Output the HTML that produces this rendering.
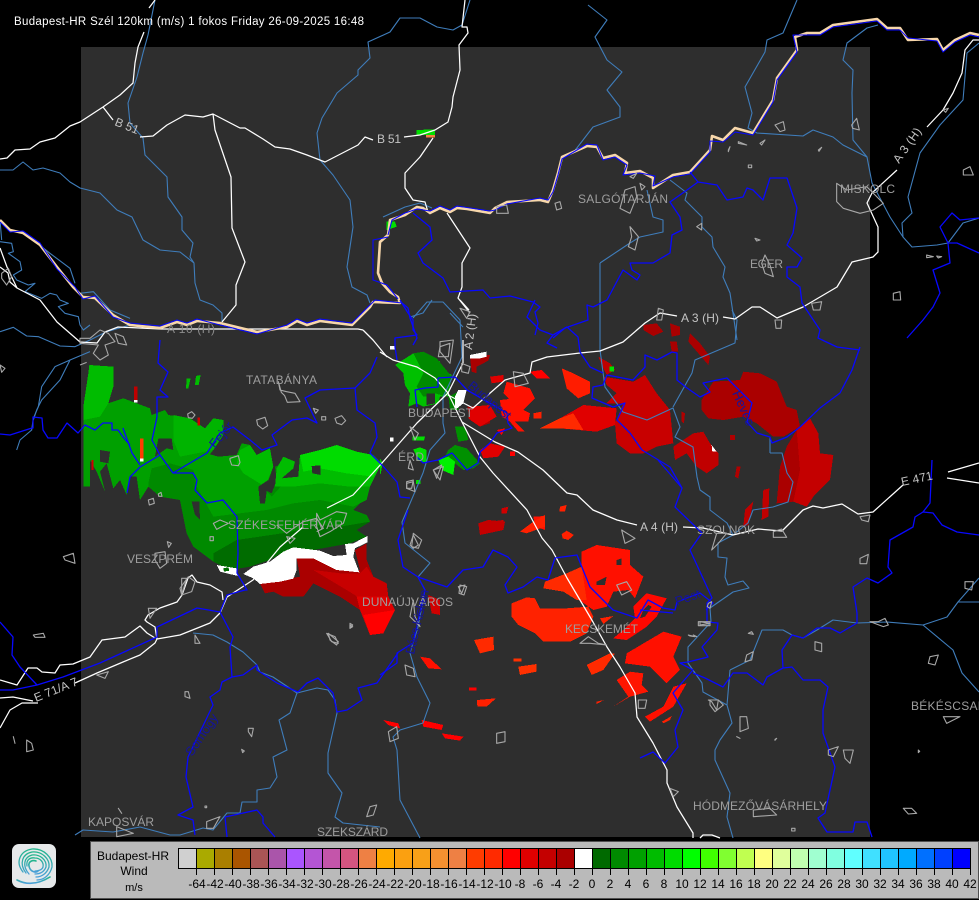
<!DOCTYPE html>
<html><head><meta charset="utf-8"><title>Budapest-HR</title>
<style>
html,body{margin:0;padding:0;background:#000;width:979px;height:900px;overflow:hidden}
svg{display:block;font-family:"Liberation Sans",sans-serif}
.riv{fill:none;stroke:#3f7dbb;stroke-width:1.1;stroke-linejoin:round}
.blu{fill:none;stroke:#0808ff;stroke-width:1.3;stroke-linejoin:round}
.rd{fill:none;stroke:#fff;stroke-width:1.25;stroke-linejoin:round}
.twn{fill:none;stroke:#a8a8a8;stroke-linejoin:round}
.lb{fill:#9e9e9e;font-size:12px}
.rl{fill:#c4c4c4;font-size:12px}
.cn{fill:#14149c;font-size:13px}
.lg{fill:#000;font-size:12px;text-anchor:middle}
</style></head><body>
<svg width="979" height="900" viewBox="0 0 979 900" xmlns="http://www.w3.org/2000/svg">
<defs><linearGradient id="sw" x1="0" y1="0" x2="0" y2="1"><stop offset="0" stop-color="#22b58c"/><stop offset="1" stop-color="#4a9fd8"/></linearGradient></defs>
<rect width="979" height="900" fill="#000"/>
<rect x="81" y="47" width="789" height="790" fill="#2e2e2e"/>

<!-- west radar -->
<g transform="translate(80,340) scale(.33333)" shape-rendering="crispEdges">
<polygon fill="#00a000" points="28,75 100,80 100,140 85,190 130,175 210,205 215,225 255,210 265,225 330,235 375,265 400,235 430,240 430,285 400,330 360,380 345,420 355,485 300,480 240,470 205,440 180,480 170,410 150,410 140,465 120,420 100,445 80,370 60,395 75,455 50,395 30,360 30,440 10,440 10,200 25,100"/>
<polygon fill="#00bc00" points="28,75 100,80 100,140 85,190 60,230 10,240 10,200 25,100"/>
<polygon fill="#00b400" points="280,225 330,235 375,265 400,235 430,240 430,285 400,330 300,350 280,300"/>
<polygon fill="#008a00" points="205,430 215,385 270,370 340,390 380,340 415,350 470,345 485,310 510,315 530,345 570,325 580,380 555,450 575,460 590,420 585,380 610,370 610,350 645,365 640,385 620,400 605,415 655,410 660,345 720,330 770,315 830,335 880,345 905,370 870,440 860,470 820,510 860,525 870,545 830,570 860,590 810,610 700,630 620,630 570,660 510,680 450,690 400,665 340,620 320,580 300,480 240,470 205,440"/>
<polygon fill="#00a000" points="380,340 415,350 470,345 485,310 510,315 530,345 570,325 580,380 555,450 575,470 620,420 655,410 700,420 830,420 870,440 860,480 820,500 720,480 640,490 560,510 480,520 400,530 350,440 340,390"/>
<polygon fill="#00bc00" points="480,330 510,315 530,345 570,325 580,380 555,440 490,400 470,370"/>
<polygon fill="#00bc00" points="610,350 645,365 640,385 605,415 655,410 660,345 720,330 770,315 830,335 880,345 905,370 870,440 810,440 720,430 640,440 585,440 590,385"/>
<polygon fill="#00dc00" points="660,345 720,330 770,315 830,335 880,345 905,370 880,410 800,400 720,385 670,395"/>
<polygon fill="#006c00" points="400,640 470,600 620,578 720,555 780,560 870,545 830,570 860,590 810,610 700,630 620,630 570,660 510,680 450,690 400,665"/>
<polygon fill="#2e2e2e" points="60,330 90,335 85,370 60,365"/>
<polygon fill="#2e2e2e" points="235,295 275,295 280,330 260,325 225,350"/>
<polygon fill="#2e2e2e" points="695,378 722,376 722,405 697,400"/>
<polygon fill="#2e2e2e" points="335,485 358,485 360,540 345,525"/>
<polygon fill="#2e2e2e" points="535,440 565,420 555,490 540,490"/>
<polygon fill="#aa0000" points="540,730 555,760 580,755 610,770 670,770 700,730 780,770 840,810 870,885 910,880 945,810 925,770 920,730 880,710 860,660 860,610 825,630 840,690 770,690 700,655 650,655 660,710 600,720"/>
<polygon fill="#c80000" points="700,690 780,700 840,700 860,680 880,710 920,730 925,770 945,810 880,800 800,750"/>
<polygon fill="#e00000" points="830,770 925,770 945,810 910,880 870,885 840,810"/>
<polygon fill="#ff0000" points="850,825 945,810 910,880 870,885"/>
<polygon fill="#ffffff" points="862,588 820,610 795,612 800,645 760,648 720,632 690,628 640,622 610,635 570,665 520,680 490,702 520,715 540,732 600,725 640,716 650,690 650,655 700,655 770,690 838,697 820,650 825,625 862,607"/>
<polygon fill="#ffffff" points="410,675 470,685 475,708 440,700 420,695"/>
<polygon fill="#006c00" points="430,685 445,682 448,692 432,695"/>
<polygon fill="#c00000" points="162,140 172,140 172,180 162,180"/>
<polygon fill="#fff" points="162,180 172,180 172,188 162,188"/>
<polygon fill="#ff3c00" points="180,295 190,295 190,355 180,355"/>
<polygon fill="#fff" points="180,355 190,355 190,365 180,365"/>
<polygon fill="#d00000" points="352,232 360,232 360,256 352,256"/>
<polygon fill="#d00000" points="35,360 40,360 40,390 35,390"/>
<polygon fill="#00bc00" points="320,115 332,115 325,145 318,145"/>
<polygon fill="#00bc00" points="348,108 362,105 356,135 345,135"/>
<polygon fill="#fff" points="930,292 940,292 940,304 930,304"/>
</g>
<!-- Budapest radar -->
<g transform="translate(380,300) scale(.33333)" shape-rendering="crispEdges">
<polygon fill="#00c000" points="45,195 100,160 130,155 180,185 190,210 215,225 205,290 180,290 175,310 130,320 110,310 85,320 90,280 75,255 70,220"/>
<polygon fill="#008a00" points="100,160 130,155 170,175 215,230 200,290 165,280 140,290 130,290 110,260 130,220"/>
<polygon fill="#2e2e2e" points="140,280 165,280 165,310 140,315"/>
<polygon fill="#008000" points="205,290 235,275 235,330 210,330"/>
<polygon fill="#fff" points="235,270 260,270 250,310 225,330 225,290"/>
<polygon fill="#aa0000" points="262,320 330,325 330,370 300,380 270,360"/>
<polygon fill="#aa0000" points="270,170 330,165 325,182 290,200 290,220 275,215"/>
<polygon fill="#fff" points="270,165 320,155 320,170 300,175 270,175"/>
<polygon fill="#009000" points="225,380 255,380 265,420 235,425"/>
<polygon fill="#009000" points="205,450 225,435 260,445 300,490 280,505 250,510 225,490 220,520 190,510 175,490 195,470"/>
<polygon fill="#00f000" points="175,480 205,470 225,485 220,525 190,512"/>
<polygon fill="#00e000" points="100,448 120,442 140,450 140,490 115,482"/>
<polygon fill="#00e000" points="98,410 135,410 132,422 98,422"/>
<polygon fill="#00d000" points="0,475 8,490 2,522 0,522"/>
<polygon fill="#00e000" points="108,540 122,540 122,552 108,552"/>
<polygon fill="#fff" points="30,138 45,138 45,148 30,148"/>
<polygon fill="#fff" points="30,412 40,412 40,424 30,424"/>
</g>
<!-- east radar -->
<g transform="translate(460,310) scale(.33333)" shape-rendering="crispEdges">
<polygon fill="#c80000" points="430,200 520,215 555,195 590,250 630,300 640,400 590,410 550,430 510,430 470,400 465,340 490,280 440,280 470,250 440,225"/>
<polygon fill="#e00000" points="240,355 300,325 370,285 470,295 465,345 410,365 300,355 260,355"/>
<polygon fill="#ff2a00" points="240,355 300,325 340,310 370,360 300,355"/>
<polygon fill="#ff1c00" points="305,175 340,190 390,215 390,250 355,265 320,235"/>
<polygon fill="#c00000" points="640,410 700,370 730,365 750,400 775,430 775,465 740,490 710,470 680,430 645,450"/>
<polygon fill="#aa0000" points="725,270 760,215 840,210 850,185 900,190 950,215 980,290 1010,300 1020,350 970,380 940,380 890,340 850,320 790,330 745,325 725,300"/>
<polygon fill="#c40000" points="950,580 960,470 980,410 1010,360 1050,325 1075,370 1080,430 1120,435 1110,510 1060,560 1040,590 1000,575"/>
<polygon fill="#aa0000" points="950,580 960,470 980,410 1010,360 1020,480 1000,575"/>
<polygon fill="#aa0000" points="550,45 590,40 610,65 580,78 550,60"/>
<polygon fill="#aa0000" points="630,40 660,50 660,75 635,80"/>
<polygon fill="#aa0000" points="690,70 720,100 750,140 745,165 715,130 685,95"/>
<polygon fill="#aa0000" points="630,95 650,95 655,125 635,125"/>
<polygon fill="#b00000" points="665,305 675,310 672,340 665,335"/>
<polygon fill="#b00000" points="810,375 825,375 825,390 810,390"/>
<polygon fill="#b00000" points="830,470 842,470 835,505 825,500"/>
<polygon fill="#c00000" points="910,540 928,535 925,620 905,630 908,570"/>
<polygon fill="#c00000" points="855,600 880,575 865,645 850,650"/>
<polygon fill="#ff1000" points="140,215 210,235 225,265 190,280 185,300 165,290 150,270 130,250"/>
<polygon fill="#ff0000" points="210,185 245,180 270,205 230,205"/>
<polygon fill="#e00000" points="90,200 130,195 130,215 95,220"/>
<polygon fill="#e00000" points="35,290 90,285 110,320 60,350 25,325"/>
<polygon fill="#ff1000" points="120,270 215,260 225,265 190,300 210,310 205,335 165,335 195,365 175,365 150,335 125,320"/>
<polygon fill="#ff2000" points="220,310 245,305 245,325 220,325"/>
<polygon fill="#ff0000" points="110,360 135,355 125,375"/>
<polygon fill="#e00000" points="60,420 90,400 135,410 115,440 70,445"/>
<polygon fill="#ff0000" points="150,425 165,425 165,438 150,438"/>
<polygon fill="#ff2000" points="300,590 320,585 315,605 298,605"/>
<polygon fill="#d00000" points="125,595 145,590 140,610 125,610"/>
<polygon fill="#ff1000" points="220,620 255,618 255,660 225,650"/>
<polygon fill="#d00000" points="55,640 130,630 130,655 60,655"/>
<polygon fill="#c00000" points="415,140 450,160 465,180 440,195 425,165"/>
<polygon fill="#00e000" points="448,170 462,170 462,185 448,185"/>
<polygon fill="#fff" points="755,405 770,425 757,425"/>
</g>
<!-- south radar -->
<g transform="translate(380,510) scale(.33333)" shape-rendering="crispEdges">
<polygon fill="#c40000" points="295,40 325,30 375,35 370,60 300,75"/>
<polygon fill="#ff2000" points="420,65 460,35 495,15 495,50 440,70"/>
<polygon fill="#ff2000" points="545,72 560,62 582,75 565,90 548,85"/>
<polygon fill="#ff1000" points="605,125 650,105 750,120 750,165 790,200 765,265 745,240 700,245 680,290 640,300 600,272 550,245 490,235 495,215 560,190 605,170"/>
<polygon fill="#ff2a00" points="490,235 495,215 560,190 605,170 620,270 590,270 550,245"/>
<polygon fill="#2e2e2e" points="650,215 680,200 675,225 650,225"/>
<polygon fill="#2e2e2e" points="710,150 725,145 725,165 710,165"/>
<polygon fill="#ff2200" points="395,280 440,262 465,265 480,295 560,295 625,290 640,320 620,370 570,395 490,395 465,370 415,345 395,320"/>
<polygon fill="#ff0800" points="760,290 800,250 860,265 830,320 800,350 740,390 700,385 735,355 765,325"/>
<polygon fill="#2e2e2e" points="790,300 805,285 815,290 795,320 780,325"/>
<polygon fill="#ff1000" points="740,430 850,365 905,380 880,440 900,480 860,520 810,470 735,460"/>
<polygon fill="#ff2a00" points="620,465 690,430 705,430 670,480 635,495"/>
<polygon fill="#ff1500" points="710,510 750,485 790,490 785,525 805,545 750,560 700,590 745,560"/>
<polygon fill="#ff1000" points="795,620 850,590 880,530 920,520 880,590 810,635"/>
<polygon fill="#ff2a00" points="282,390 340,380 342,420 300,430"/>
<polygon fill="#ff1000" points="120,440 150,445 185,478 145,475"/>
<polygon fill="#ff3000" points="415,470 470,462 470,485 420,495"/>
<polygon fill="#ff3000" points="400,445 425,445 425,455 400,455"/>
<polygon fill="#ff0000" points="267,532 290,532 290,542 267,542"/>
<polygon fill="#ff2000" points="291,570 348,565 320,590 292,590"/>
<polygon fill="#ff0000" points="125,630 190,645 185,660 130,650"/>
<polygon fill="#ff0000" points="185,670 250,680 240,692 195,685"/>
<polygon fill="#ff0000" points="10,630 55,640 60,655 25,645"/>
<polygon fill="#d00000" points="145,255 180,270 180,315 155,310"/>
<polygon fill="#ff2000" points="650,575 672,570 650,582"/>
<polygon fill="#ff2000" points="846,635 875,618 870,630 850,640"/>
<polygon fill="#ff2000" points="660,325 700,318 670,342"/>
</g>
<!-- north small -->
<g transform="scale(.33333)" shape-rendering="crispEdges">
<polygon fill="#00dd00" points="1250,390 1305,388 1305,405 1250,405"/>
<polygon fill="#f08040" points="1278,405 1305,405 1305,413 1278,413"/>
<polygon fill="#00dd00" points="1160,665 1185,665 1190,680 1160,690"/>
</g>

<!-- rivers -->
<g class="riv">
<path d="M155 0L148 35 143 53 137 77 128 103 130 123 143 138 145 155 167 177 168 197 182 217 182 230 193 243 190 257 194 263 195 283 200 300 213 305 222 313 222 322"/>
<path d="M0 170L13 170 23 162 33 170 43 168 60 173 70 182 80 188 100 193 117 210 132 217 143 240 160 250 180 252 194 263"/>
<path d="M470 0L462 25 453 30 437 27 420 18 400 18 390 32 368 42 370 58 358 70 358 75 337 93 322 118 317 133 320 160 333 175 350 200 353 227 347 267 352 287 367 295 370 303"/>
<path d="M383 217L405 207 420 203 432 208"/>
<path d="M413 318L427 302 443 302 460 320 462 357 443 397 443 423 445 433 430 450 423 473 402 522 405 543 430 563 418 577 425 590 418 627 410 653 417 677 430 703 423 723 400 730 393 737 397 750 400 800 420 838"/>
<path d="M432 300L423 313 410 317"/>
<path d="M450 313L463 327"/>
<path d="M600 263L600 350 605 387 623 412 647 420 673 408 680 427 675 437 693 447 697 477 700 490 710 497 710 510 727 523 733 535 718 543 718 557 727 558 725 577 728 585 743 581 749 588 733 592 710 608 711 622 688 647 688 663 702 683 703 692 727 705 732 723 720 740 715 750 715 760 730 793 727 817 733 838"/>
<path d="M732 310L737 320 735 343 695 360 692 373 673 407"/>
<path d="M770 453L770 437M770 453L782 453 787 473 793 482 788 502 773 507 753 510 748 523 733 535"/>
<path d="M588 5L607 20 595 37 607 60 622 72 607 90 620 107 620 117 593 127 573 153 562 157"/>
<path d="M797 0L783 33 767 40 765 52 745 87 752 113 748 128 757 133 803 136 813 130 833 137 843 145 867 157 872 183 890 217 903 237 912 247 937 245 948 243 963 223 979 218"/>
<path d="M878 25L867 28 847 43 843 60 853 70 852 93 853 140 867 157"/>
<path d="M979 43L967 53 963 100 940 125 920 153 908 197 912 213 902 223 903 237"/>
<path d="M670 180L687 193 685 200 702 217 702 227 712 237 713 247 725 267 723 277 730 293 737 340"/>
<path d="M647 190L653 217 663 220 663 232 640 237 630 243 600 263"/>
<path d="M730 670L750 660 762 630 783 630 792 635 803 638 817 630 833 620 857 623 887 622 923 625 947 617 958 602 979 602M958 602L979 578M923 625L953 650 962 673 979 692M730 670L727 705"/>
<path d="M75 835L83 830 113 832 140 827 170 835 180 835 203 828 213 830 227 813 240 813 242 802 257 802 257 790 270 788 277 777 273 757 287 750 279 720 290 713 297 693 317 688 328 690 335 700 337 713 328 753 328 773 342 793 335 817 343 823 380 827"/>
<path d="M193 633L213 635 227 642 243 652 257 665 260 672 273 677 297 693"/>
</g>
<g class="riv" transform="translate(0,210) scale(.33333)" stroke-width="3.3">
<path stroke-width="3.3" d="M0 30L5 90M0 95L35 100 40 125 25 130 60 155 65 180 40 195 50 210 85 225 105 220 75 245 125 265 150 250 170 255 180 270 205 280 175 290 195 310 235 320 240 345 250 360 270 345"/>
<path stroke-width="3.3" d="M0 365L40 352 80 378 115 380 180 408 225 410 270 390 320 365 390 345"/>
<path stroke-width="3.3" d="M270 425L210 450 165 470 125 530 115 590 100 625 95 660 60 690 50 720"/>
<path stroke-width="3.3" d="M210 450L180 510 125 570 110 600 100 630"/>
<path stroke-width="3.3" d="M100 90L150 130 210 175 225 220M240 250L280 245 330 300 390 325"/>
</g>
<path class="blu" d="M0 434L10 435 32 428 33 428 33 417 42 418 43 430 48 438 57 438 67 423 78 433 85 425 95 430 103 423 112 423 112 430 118 430 123 437 130 445"/>

<!-- roads -->
<g class="rd">
<path d="M155 0L149 8"/>
<path d="M144 32L138 47 135 63 133 83 120 95 103 107 80 122 70 126 55 138 40 142 30 149 15 150 7 158 0 159"/>
<path d="M103 107L113 120"/>
<path d="M140 137L153 136 167 125 185 115 203 117 213 114 240 128 245 128 263 139 275 147 290 149 307 155 325 162 358 145 365 137 373 140"/>
<path d="M404 137L420 135 435 130 448 122 452 107 453 97 460 70 459 45 468 33 467 27 462 27 465 0"/>
<path d="M433 138L420 157 405 173 405 188 413 200 425 202 428 212"/>
<path d="M213 114L215 130 231 177 232 228 245 262 236 285 236 305 222 322"/>
<path d="M447 213L470 248 462 263 462 287 458 298 470 313"/>
<path d="M463 363L448 393 417 423 382 463 353 495 327 508"/>
<path d="M303 527L280 547 253 580 227 597 220 613 210 623 180 635 157 639 155 643 140 655 123 662 97 673 75 683"/>
<path d="M0 698L13 697 33 701"/>
<path d="M0 728L10 710 22 703 38 703"/>
<path d="M157 639L155 627 147 622 145 620 148 615 160 608 177 602 182 595 188 578 192 575 197 582 210 585 222 592 223 600"/>
<path d="M0 680L17 685 28 668 37 668 42 672 55 673 60 665 73 664 90 657 102 640 125 637 140 626 147 633 155 638"/>
<path d="M448 395L473 408 505 380 530 373 532 362 547 357 580 353 600 351 623 342 645 323 660 313 677 316"/>
<path d="M723 317L735 319 752 307 760 307 777 318 803 307 837 287 852 262 873 257 878 252 878 227 867 203 872 193 897 170"/>
<path d="M927 127L943 110 953 93 962 73 965 50 973 40 979 40"/>
<path d="M462 422L495 442 518 452 543 470 567 493 577 495 593 510 617 520 637 525"/>
<path d="M683 527L703 528 733 535 758 529 782 531 803 510 813 506 823 508 842 504 858 514 873 512 903 485"/>
<path d="M948 472L979 463M947 478L979 483"/>
<path d="M462 422L480 457 493 473 527 510 542 538 552 550 567 578 580 600 593 622 607 647 620 667 635 693 637 717 653 743 667 770 667 783 677 807 693 833 693 838"/>
<path d="M700 838L703 835 712 835 720 838"/>
<path d="M380 352L393 360 417 367 435 378 448 393 462 422"/>
<path d="M363 330L373 340 387 357"/>
<path d="M460 300L469 310"/>
<path d="M0 248L7 267 17 288 40 300 57 322 80 342 97 343 105 332 118 327 160 329 358 329 363 330"/>
<path d="M0 267L8 273 10 282 17 288"/>
<path d="M463 340L463 363"/>
</g>
<!-- border (beige) -->
<path fill="none" stroke="#f7d7ab" stroke-width="2.6" stroke-linejoin="round" d="M0 220L10 230 23 233 40 245 57 267 73 287 83 297 95 298 113 315 130 325 160 328 177 322 187 325 197 321 220 323 257 332 287 327 297 321 307 325 320 321 352 325 370 307 373 302 400 303 398 297 390 292 382 283 378 273 380 242 388 235 390 220 405 215 417 207 423 208 430 213 440 208 450 212 457 208 467 209 490 213 495 208 507 202 540 200 548 202 553 190 558 173 562 157 587 146 597 147 603 158 615 155 627 163 625 173 640 171 653 178 653 188 673 175 690 172 710 150 712 136 723 140 735 128 753 133 773 100 777 78 797 50 795 37 807 33 820 33 833 25 877 19 887 28 900 28 908 40 937 39 943 50 955 40 970 33 979 35"/>
<path fill="none" stroke="#0808ff" stroke-width="1.1" stroke-linejoin="round" d="M0 222L10 232 23 231 40 243 57 269 75 287 83 299 95 296 113 317 130 323 160 326 177 320 187 323 197 319 220 325 257 334 287 325 297 319 307 323 320 319 352 323 370 305 375 300 402 303M388 237L373 240 373 280 387 285 398 299M388 235L392 220 405 213 417 209 430 211 440 206 450 210 457 206 490 211 495 210 507 204 540 198 548 200 553 192 558 175 562 159 587 144 597 145 603 160 615 157 627 165 623 175 640 173 655 176 653 186 673 177 690 174 710 152 710 141 723 142 735 132 753 135 773 102 777 80 797 52 793 35 807 35 820 35 833 27 877 21 887 30 900 30 908 38 937 41 943 52 955 42 970 35 979 37"/>

<!-- blue county lines -->
<g class="blu">
<path d="M413 213L430 227 432 240 418 253 423 263 443 278 450 292 483 290 490 298 510 296 533 302 540 307 535 312 538 323 535 335"/>
<path d="M690 172L698 182 687 190 670 202 680 217 682 230 672 235 670 253 653 263 630 263 632 270 640 275 637 280 623 270 607 300 593 307 587 305 588 320 565 328 553 338"/>
<path d="M698 182L717 185 727 200 743 197 747 188 753 190 763 200 770 178 787 178 797 208 793 233 787 245 802 258 797 267 787 267 787 277 800 287 802 303 820 330 818 338 837 347 860 350"/>
<path d="M907 338L923 320 933 307 940 293 933 270 950 263 948 243 957 243 979 253"/>
<path d="M948 243L940 227 952 213 960 220 979 218"/>
<path d="M860 347L852 370 840 393 820 408 800 427 787 437 772 443 770 437 757 433 747 422 752 403 727 378 703 383 710 392 700 397 687 388 677 380 677 353 672 352 657 360 645 355 645 367 633 380 607 375 603 385 593 387 592 398 613 407 625 403 617 420 630 433 642 450 670 467 682 488 675 507 702 533 690 550 707 587 712 598 707 603 707 622 718 623 717 630 702 647 708 657 688 662 680 663 693 670 673 693 683 710 675 730 678 747 665 763 653 752 640 758"/>
<path d="M535 300L527 317 540 330 553 335 567 327 578 337 580 352 590 367 603 373M553 335L547 343 557 348"/>
<path d="M555 558L577 555 590 587 613 610 637 618 648 600 663 608 675 610 677 602 700 593 713 603 706 610"/>
<path d="M555 558L548 580 537 577 523 587 508 593 505 585 517 567 508 557 493 550 483 567 463 570 447 587 418 577"/>
<path d="M408 510L398 540 403 567 418 577 425 590 413 643 397 653 397 663 380 675"/>
<path d="M398 653L377 683 358 688 362 700 347 710 337 712 333 693 318 678 307 683 298 692 277 683 257 670 257 665 243 675 232 677 222 682 220 690 210 697 213 705 188 757 186 777 193 807 178 815 193 820 195 835"/>
<path d="M232 677L230 647 233 637 220 612 197 608 157 627 157 637 100 663 63 677 37 685 13 690 0 690M37 685L20 667 12 655 13 637 0 622"/>
<path d="M220 612L227 595 245 590 247 590 237 573 238 553 237 517 223 500 207 503 195 490 197 480 193 473 173 473 160 455 140 467 130 477 127 493M140 465L132 453 123 428"/>
<path d="M160 455L152 440 157 417 157 397 168 397 160 390 168 372 158 363 160 340"/>
<path d="M173 473L207 453 220 433 233 427 250 440 262 450 277 445 272 435 292 420 307 418 317 423 305 398 320 390 355 388 357 410 375 423 377 437 370 453 382 465 397 482 400 497 410 498"/>
<path d="M355 388L370 373 377 357"/>
<path d="M400 300L408 313 413 320 413 330 417 335 395 338 395 347 397 360"/>
<path d="M438 378L455 377 467 390 507 413 508 423 512 428 497 433 490 443 480 452 478 463 467 470 452 453 438 460 423 463 417 457"/>
<path d="M438 378L438 387 425 388 415 390 417 407"/>
<path d="M402 303L408 308 410 318 417 338 413 345"/>
<path d="M225 817L257 810 263 817 263 823 275 837M225 817L227 837"/>
<path d="M640 610L673 613"/>
<path d="M658 460L682 488"/>
<path d="M932 460L930 503 923 512 915 517 913 527 890 540 888 567 892 573 878 583 867 578 853 587 857 613 857 623 840 633 830 628 817 628 803 638 792 635 782 650 783 668 767 677 763 685 747 673 733 673 723 687 705 678 693 673"/>
<path d="M923 512L933 513 942 525 957 532 979 535"/>
<path d="M783 668L792 667 803 680 820 680 828 687 823 710 823 733 835 767 830 790 825 813 818 818 827 832 853 832 855 822 867 822 872 837"/>
</g>

<!-- towns -->
<g class="twn" transform="translate(80,340) scale(.33333)" stroke-width="3.3">
<path d="M323 222l12-7 10 10-8 10-12-2zM530 240l25-8 8 25-15 10-15-12zM765 235l20-8 12 15-12 12-15-5zM450 355l25-8 5 20-5 10-20-2-5-15zM595 125l5 25 20 5 25 5 15 25-38 2-8-20-10-10zM205 480l15-5 3 15-15 5zM235 462l8-5 3 12-10 0zM700 205l15 5-8 10zM725 230h12v10h-12zM400 550l20-10 25 10-20 10-15 8zM590 555l30 25 20-15 30-20 40-10 20 30-20 10M710 520l10 20 50-25 30 5-10 30-40 25-30 15-10-30zM620 590l25 5-15 15zM225 640l30-5 5 35-20 15-15-25zM1000 580l25 20-10 25-20-5zM1140 735l20 5-8 25-15-5zM1080 20l30-10-5 40-30 0zM980 425l20-5-5 25-15 0zM990 360l10 30-15-5zM1060 390l30-10-10 40zM390 590h10v12h-10zM262 605l12 5-8 12zM810 850l8 5-8 10zM740 880l25 10 10 20-20-5zM1000 780l5 50 15 30-30-30zM300 745l25-35 20 15-10 30-30 10z"/>
</g>
<g class="twn" transform="translate(490,0) scale(.33333)" stroke-width="3.3">
<path d="M195 610l15-5 5 20-15 5zM20 620l30-5 5 25-35 0zM405 570l30-10 5 30-20 50-30-15zM420 680l25 30-10 40-20-10 10-30zM620 680l15-10v20zM855 375l25-10 5 25-15 5zM745 425l25 10-25-5zM810 430l15-10-10 15zM715 450l5-10-5 15zM775 495h10v8h-10zM985 450l10-8-8 12zM795 715l15 5-10 3zM1085 375l15-20 8 35-20-5zM1040 550l30 20 60-10 30 30 20 20-30 20-40 10-50-15-20-20zM825 765l15 30 10 35-25-10-10-30zM965 910l30-5-5 25-20 0zM855 960l20 0-2 25-15 0zM420 530l20-10-10 15zM450 550l15 10-10 10zM1210 880l20-5 2 25-22 0zM1420 510l20-10 10 25-30 0zM1360 330l15-5-8 12zM1310 765l20 5-20 3zM1340 768l15 2-10 4zM505 925l15 5-5 30-15 0z"/>
</g>
<g class="twn" transform="translate(640,460) scale(.33333)" stroke-width="3.3">
<path d="M660 295l25-12-5 28-20 0zM400 215l25-8 15 25-40 0zM230 220l30 0-25 30-20 20zM660 170l30-5-5 20-20-5zM205 430l10-5-5 20-8-5zM175 485h35v12h-35zM145 525l20 5-15-2zM325 520l10-5 5 8zM320 585l20-10-5 25-20 5zM525 545l20 5 0 25-20-5zM210 720l25 0 15 15-25 20-15-20zM300 770l20 0 5 35-25 10zM290 830l10 5-10-5zM405 838l5-3-5 6zM565 870l30-10-15 30-15-5zM610 870l30 0-10 40-15-15zM340 1050l50-5 20 20-70 5zM90 985l25 10-15 15zM455 1105h10v8h-10zM870 590l25-5-10 30-20-5zM975 365l25 0-5 25-20-5zM790 1045l25 0 15 15-25 2zM910 770l50 0-40 20zM835 870l4 4-4 4zM690 485h25l20-10 10 20-15 5z"/>
</g>
<g class="twn" transform="translate(0,540) scale(.33333)" stroke-width="3.3">
<path d="M190 50l30-10 5 30-30-10zM100 285l30-5 5 12-30 0zM445 205l25 0-20 30zM545 115l15 0-15 50zM555 455l10 0 5 20-15-5zM745 565l15 0-5 25-10-15zM725 628l8 5-5 5zM1110 800l20-5-10 30-20 5zM985 280l30 25-5 10-20-15zM80 600l15 10 5 20-20 5zM40 590l5 20zM620 845l40-15-20 35-20 0zM615 798h5v5h-5zM355 805l10 15zM350 860l50 20-50 10zM585 285l15 25-15 0zM290 405l35-10-10 20zM1050 255l8 5-8 5z"/>
</g>
<g class="twn" transform="translate(380,510) scale(.33333)" stroke-width="3.3">
<path d="M100 75l15 30-15 10-10-10zM235 230l20-5-10 25zM710 225l30-10 15 25-30 15zM75 465l25 10 5 25-25-5zM25 665l25-15 5 35-25 10zM350 670l25-5 0 30-25 5zM940 375l10 5-10-5zM960 335l30 5-30 5zM985 570h30l-5 30-15-25zM775 570l25 0-5 25-20 0zM600 400l25-20 30 20 25 5-50-5zM725 60l40 25-30 15z"/>
</g>
<g class="twn" transform="translate(380,300) scale(.33333)" stroke-width="3.3">
<path d="M180 125l40-5-10 70-30-35zM240 25l30 10-10 20zM245 190l25 10-5 20-20-5zM400 215l30 5 15 30-40 10zM90 380l25 20-10 20zM80 550l20-5 5 30-25-10zM160 510l25-15-15 40z"/>
</g>
<g class="twn" transform="translate(0,210) scale(.33333)" stroke-width="3.3">
<path d="M5 190L25 175 35 200 20 225 5 205zM240 385l30 0 30-25 25 10 20 25-30 10 10 30-25 15-20-20 15-25-55-5zM345 370l25 10 10 25-25-5zM240 465l20-8M0 465l15 10-10 12z"/>
</g>

<!-- labels -->
<g class="lb">
<text x="246" y="384" textLength="71">TATABÁNYA</text>
<text x="408" y="417" textLength="65">BUDAPEST</text>
<text x="398" y="461" textLength="26">ÉRD</text>
<text x="228" y="529" textLength="115">SZÉKESFEHÉRVÁR</text>
<text x="127" y="563" textLength="66">VESZPRÉM</text>
<text x="362" y="606" textLength="91">DUNAÚJVÁROS</text>
<text x="565" y="633" textLength="73">KECSKEMÉT</text>
<text x="578" y="203" textLength="90">SALGÓTARJÁN</text>
<text x="750" y="268" textLength="33">EGER</text>
<text x="840" y="193" textLength="55">MISKOLC</text>
<text x="697" y="534" textLength="58">SZOLNOK</text>
<text x="693" y="810" textLength="134">HÓDMEZŐVÁSÁRHELY</text>
<text x="911" y="710" textLength="83">BÉKÉSCSABA</text>
<text x="88" y="826" textLength="66">KAPOSVÁR</text>
<text x="317" y="836" textLength="71">SZEKSZÁRD</text>
</g>
<g class="rl">
<text transform="translate(114,125) rotate(22)">B 51</text>
<text x="377" y="143" textLength="24">B 51</text>
<text x="167" y="333" textLength="48" fill="#8c8c8c">A 10 (H)</text>
<text transform="translate(472,350) rotate(-83)" textLength="36">A 2 (H)</text>
<text x="681" y="322" textLength="38">A 3 (H)</text>
<text transform="translate(899,164) rotate(-55)" textLength="40">A 3 (H)</text>
<text x="640" y="531" textLength="38">A 4 (H)</text>
<text transform="translate(902,486) rotate(-12)" textLength="32">E 471</text>
<text transform="translate(36,702) rotate(-22)" textLength="46">E 71/A 7</text>
</g>
<g class="cn">
<text transform="translate(467,387) rotate(40)" textLength="52">Budapest</text>
<text transform="translate(732,393) rotate(66)">Heves</text>
<text transform="translate(677,606) rotate(-20)">Pest</text>
<text transform="translate(192,757) rotate(-56)">Somogy</text>
<text transform="translate(414,655) rotate(-77)" textLength="66">Bács-Kiskun</text>
<text transform="translate(215,449) rotate(-50)">Fejér</text>
</g>
<text x="14" y="25" fill="#fff" font-size="11.5" textLength="350">Budapest-HR Szél 120km (m/s) 1 fokos Friday 26-09-2025 16:48</text>

<!-- legend -->
<rect x="90.5" y="841.5" width="888" height="57" fill="#c8c8c8" fill-opacity=".93" stroke="#505050"/>
<text class="lg" x="133" y="860">Budapest-HR</text>
<text class="lg" x="134" y="875">Wind</text>
<text class="lg" x="134" y="891" style="font-size:11px">m/s</text>
<g stroke="#000" stroke-width="1" shape-rendering="crispEdges">
<rect x="178.5" y="848.5" width="18" height="20" fill="#d0d0d0"/>
<rect x="196.5" y="848.5" width="18" height="20" fill="#aaaa00"/>
<rect x="214.5" y="848.5" width="18" height="20" fill="#aa7f00"/>
<rect x="232.5" y="848.5" width="18" height="20" fill="#aa5500"/>
<rect x="250.5" y="848.5" width="18" height="20" fill="#aa5555"/>
<rect x="268.5" y="848.5" width="18" height="20" fill="#aa55aa"/>
<rect x="286.5" y="848.5" width="18" height="20" fill="#aa55ff"/>
<rect x="304.5" y="848.5" width="18" height="20" fill="#b455d4"/>
<rect x="322.5" y="848.5" width="18" height="20" fill="#c455aa"/>
<rect x="340.5" y="848.5" width="18" height="20" fill="#d45580"/>
<rect x="358.5" y="848.5" width="18" height="20" fill="#ee8044"/>
<rect x="376.5" y="848.5" width="18" height="20" fill="#ffaa00"/>
<rect x="394.5" y="848.5" width="18" height="20" fill="#fba010"/>
<rect x="412.5" y="848.5" width="18" height="20" fill="#f8a018"/>
<rect x="430.5" y="848.5" width="18" height="20" fill="#f59030"/>
<rect x="448.5" y="848.5" width="18" height="20" fill="#ee8044"/>
<rect x="466.5" y="848.5" width="18" height="20" fill="#ff3c00"/>
<rect x="484.5" y="848.5" width="18" height="20" fill="#ff2a00"/>
<rect x="502.5" y="848.5" width="18" height="20" fill="#ff0000"/>
<rect x="520.5" y="848.5" width="18" height="20" fill="#e00000"/>
<rect x="538.5" y="848.5" width="18" height="20" fill="#c40000"/>
<rect x="556.5" y="848.5" width="18" height="20" fill="#aa0000"/>
<rect x="574.5" y="848.5" width="18" height="20" fill="#ffffff"/>
<rect x="592.5" y="848.5" width="18" height="20" fill="#006a00"/>
<rect x="610.5" y="848.5" width="18" height="20" fill="#008a00"/>
<rect x="628.5" y="848.5" width="18" height="20" fill="#00a000"/>
<rect x="646.5" y="848.5" width="18" height="20" fill="#00bc00"/>
<rect x="664.5" y="848.5" width="18" height="20" fill="#00dc00"/>
<rect x="682.5" y="848.5" width="18" height="20" fill="#00ff00"/>
<rect x="700.5" y="848.5" width="18" height="20" fill="#40ff00"/>
<rect x="718.5" y="848.5" width="18" height="20" fill="#80ff30"/>
<rect x="736.5" y="848.5" width="18" height="20" fill="#c0ff50"/>
<rect x="754.5" y="848.5" width="18" height="20" fill="#ffff80"/>
<rect x="772.5" y="848.5" width="18" height="20" fill="#e0ff9c"/>
<rect x="790.5" y="848.5" width="18" height="20" fill="#c0ffb0"/>
<rect x="808.5" y="848.5" width="18" height="20" fill="#a0ffd0"/>
<rect x="826.5" y="848.5" width="18" height="20" fill="#80ffe0"/>
<rect x="844.5" y="848.5" width="18" height="20" fill="#60ffff"/>
<rect x="862.5" y="848.5" width="18" height="20" fill="#40e0ff"/>
<rect x="880.5" y="848.5" width="18" height="20" fill="#20c4ff"/>
<rect x="898.5" y="848.5" width="18" height="20" fill="#00aaff"/>
<rect x="916.5" y="848.5" width="18" height="20" fill="#0070ff"/>
<rect x="934.5" y="848.5" width="18" height="20" fill="#0040ff"/>
<rect x="952.5" y="848.5" width="18" height="20" fill="#0000ff"/>
<path fill="none" d="M196.5 868v7M214.5 868v7M232.5 868v7M250.5 868v7M268.5 868v7M286.5 868v7M304.5 868v7M322.5 868v7M340.5 868v7M358.5 868v7M376.5 868v7M394.5 868v7M412.5 868v7M430.5 868v7M448.5 868v7M466.5 868v7M484.5 868v7M502.5 868v7M520.5 868v7M538.5 868v7M556.5 868v7M574.5 868v7M592.5 868v7M610.5 868v7M628.5 868v7M646.5 868v7M664.5 868v7M682.5 868v7M700.5 868v7M718.5 868v7M736.5 868v7M754.5 868v7M772.5 868v7M790.5 868v7M808.5 868v7M826.5 868v7M844.5 868v7M862.5 868v7M880.5 868v7M898.5 868v7M916.5 868v7M934.5 868v7M952.5 868v7M970.5 868v7"/>
</g>
<g class="lg">
<text x="197" y="888">-64</text><text x="215" y="888">-42</text><text x="233" y="888">-40</text><text x="251" y="888">-38</text><text x="269" y="888">-36</text><text x="287" y="888">-34</text><text x="305" y="888">-32</text><text x="323" y="888">-30</text><text x="341" y="888">-28</text><text x="359" y="888">-26</text><text x="377" y="888">-24</text><text x="395" y="888">-22</text><text x="413" y="888">-20</text><text x="431" y="888">-18</text><text x="449" y="888">-16</text><text x="467" y="888">-14</text><text x="485" y="888">-12</text><text x="503" y="888">-10</text><text x="520" y="888">-8</text><text x="538" y="888">-6</text><text x="556" y="888">-4</text><text x="574" y="888">-2</text><text x="592" y="888">0</text><text x="610" y="888">2</text><text x="628" y="888">4</text><text x="646" y="888">6</text><text x="664" y="888">8</text><text x="682" y="888">10</text><text x="700" y="888">12</text><text x="718" y="888">14</text><text x="736" y="888">16</text><text x="754" y="888">18</text><text x="772" y="888">20</text><text x="790" y="888">22</text><text x="808" y="888">24</text><text x="826" y="888">26</text><text x="844" y="888">28</text><text x="862" y="888">30</text><text x="880" y="888">32</text><text x="898" y="888">34</text><text x="916" y="888">36</text><text x="934" y="888">38</text><text x="952" y="888">40</text><text x="970" y="888">42</text>
</g>

<!-- logo -->
<rect x="12" y="844" width="44" height="44" rx="7" fill="#e6e9ea"/>
<g fill="none" stroke="url(#sw)" stroke-linecap="round">
<path stroke-width="1.6" d="M17 880Q32 888 50 877"/>
<path stroke-width="1.3" d="M23 872C15 862 20 851 32 849 44 848 53 858 52 867 50 875 44 880 37 880"/>
<path stroke-width="1.3" d="M26 873C19 864 22 854 32 852 42 851 50 859 49 867 47 873 42 877 36 877"/>
<path stroke-width="1.3" d="M29 874C22 866 24 857 32 855 40 854 47 860 46 867 44 872 40 874 35 874"/>
<path stroke-width="1.3" d="M27 866C26 860 30 857 35 858 40 858 44 862 43 867 42 870 38 871 35 871"/>
<path stroke-width="1.6" d="M29 866C28 861 33 860 36 861M29 866C30 872 36 873 38 871"/>
</g>
</svg>
</body></html>
